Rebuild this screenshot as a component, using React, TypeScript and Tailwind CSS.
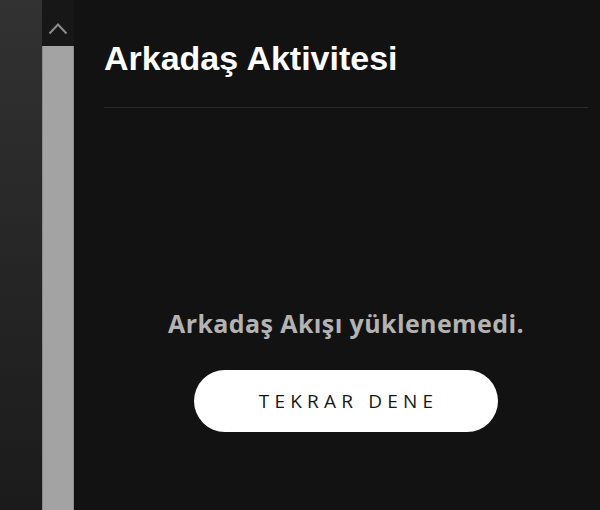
export default function App() {
  return (
    <div
      className="flex h-[510px] w-[600px] overflow-hidden bg-[#121212]"
      style={{ fontFamily: '"Open Sans", "Liberation Sans", sans-serif' }}
    >
      {/* Left edge */}
      <div className="h-full w-[42px] bg-gradient-to-b from-[#323232] to-[#1b1b1b]" />

      {/* Scrollbar */}
      <div className="flex h-full w-[32px] flex-col bg-[#171717]">
        <div className="flex h-[46px] items-start justify-center pt-[22px]">
          <svg width="20" height="13" viewBox="0 0 20 13">
            <path d="M1.5 11.5 L10 2.5 L18.5 11.5" fill="none" stroke="#8c8c8c" strokeWidth="2" />
          </svg>
        </div>
        <div className="flex-1 border-x border-[#8a8a8a] bg-[#a3a3a3]" />
      </div>

      {/* Main panel */}
      <div className="flex h-full flex-1 flex-col pl-[30px] pr-[12px]">
        <div className="flex h-[108px] items-start border-b border-[#2a2a2a] pt-[38px]">
          <h1
            className="text-[34px] font-bold leading-[40px] tracking-[0px] text-white"
            style={{ fontFamily: '"Liberation Sans", sans-serif' }}
          >
            Arkadaş Aktivitesi
          </h1>
        </div>
        <div className="flex flex-col items-center pt-[198px]">
          <p className="text-[25px] font-bold leading-[34px] tracking-[0.4px] text-[#b3b3b3]">
            Arkadaş Akışı yüklenemedi.
          </p>
          <button className="mt-[30px] flex h-[62px] w-[304px] items-center justify-center rounded-full bg-white pl-[5px] text-[19px] tracking-[5.2px] text-[#181818]">
            TEKRAR DENE
          </button>
        </div>
      </div>
    </div>
  );
}
